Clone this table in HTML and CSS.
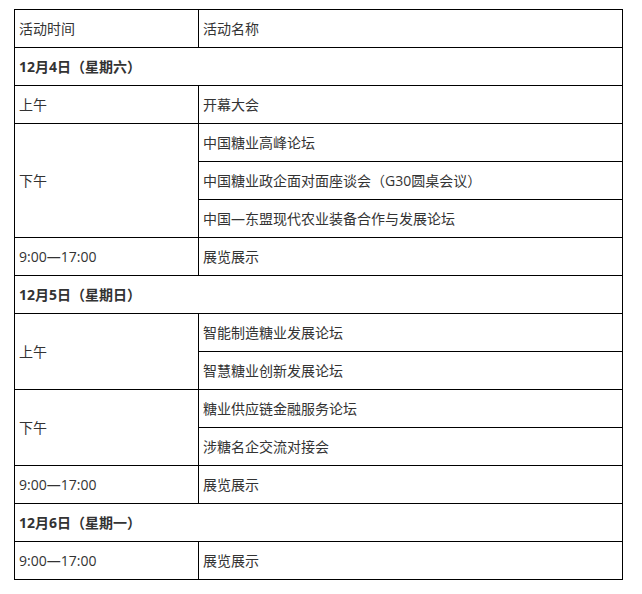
FILE: index.html
```html
<!DOCTYPE html>
<html lang="zh-CN">
<head>
<meta charset="utf-8">
<link rel="stylesheet" href="styles.css">
</head>
<body>
<div class="wrap">
<table class="schedule">
  <colgroup><col class="c1"><col class="c2"></colgroup>
  <tr><td>活动时间</td><td>活动名称</td></tr>
  <tr><td colspan="2" class="day">12月4日（星期六）</td></tr>
  <tr><td>上午</td><td>开幕大会</td></tr>
  <tr><td rowspan="3">下午</td><td>中国糖业高峰论坛</td></tr>
  <tr><td>中国糖业政企面对面座谈会（G30圆桌会议）</td></tr>
  <tr><td>中国—东盟现代农业装备合作与发展论坛</td></tr>
  <tr><td>9:00—17:00</td><td>展览展示</td></tr>
  <tr><td colspan="2" class="day">12月5日（星期日）</td></tr>
  <tr><td rowspan="2">上午</td><td>智能制造糖业发展论坛</td></tr>
  <tr><td>智慧糖业创新发展论坛</td></tr>
  <tr><td rowspan="2">下午</td><td>糖业供应链金融服务论坛</td></tr>
  <tr><td>涉糖名企交流对接会</td></tr>
  <tr><td>9:00—17:00</td><td>展览展示</td></tr>
  <tr><td colspan="2" class="day">12月6日（星期一）</td></tr>
  <tr><td>9:00—17:00</td><td>展览展示</td></tr>
</table>
</div>
</body>
</html>
```
FILE: styles.css
```css
html, body {
  margin: 0;
  padding: 0;
  background: #fff;
}
.wrap {
  padding: 9px 0 0 14px;
}
.schedule {
  border-collapse: collapse;
  width: 609px;
  table-layout: fixed;
  font-family: "Open Sans", "Noto Sans CJK SC", sans-serif;
  font-size: 14px;
  color: #333;
}
.c1 { width: 184px; }
.schedule td {
  border: 1px solid #000;
  height: 38px;
  padding: 0 0 0 4px;
  vertical-align: middle;
  line-height: 20px;
  box-sizing: border-box;
  white-space: nowrap;
}
.schedule td.day {
  font-weight: bold;
}
```
